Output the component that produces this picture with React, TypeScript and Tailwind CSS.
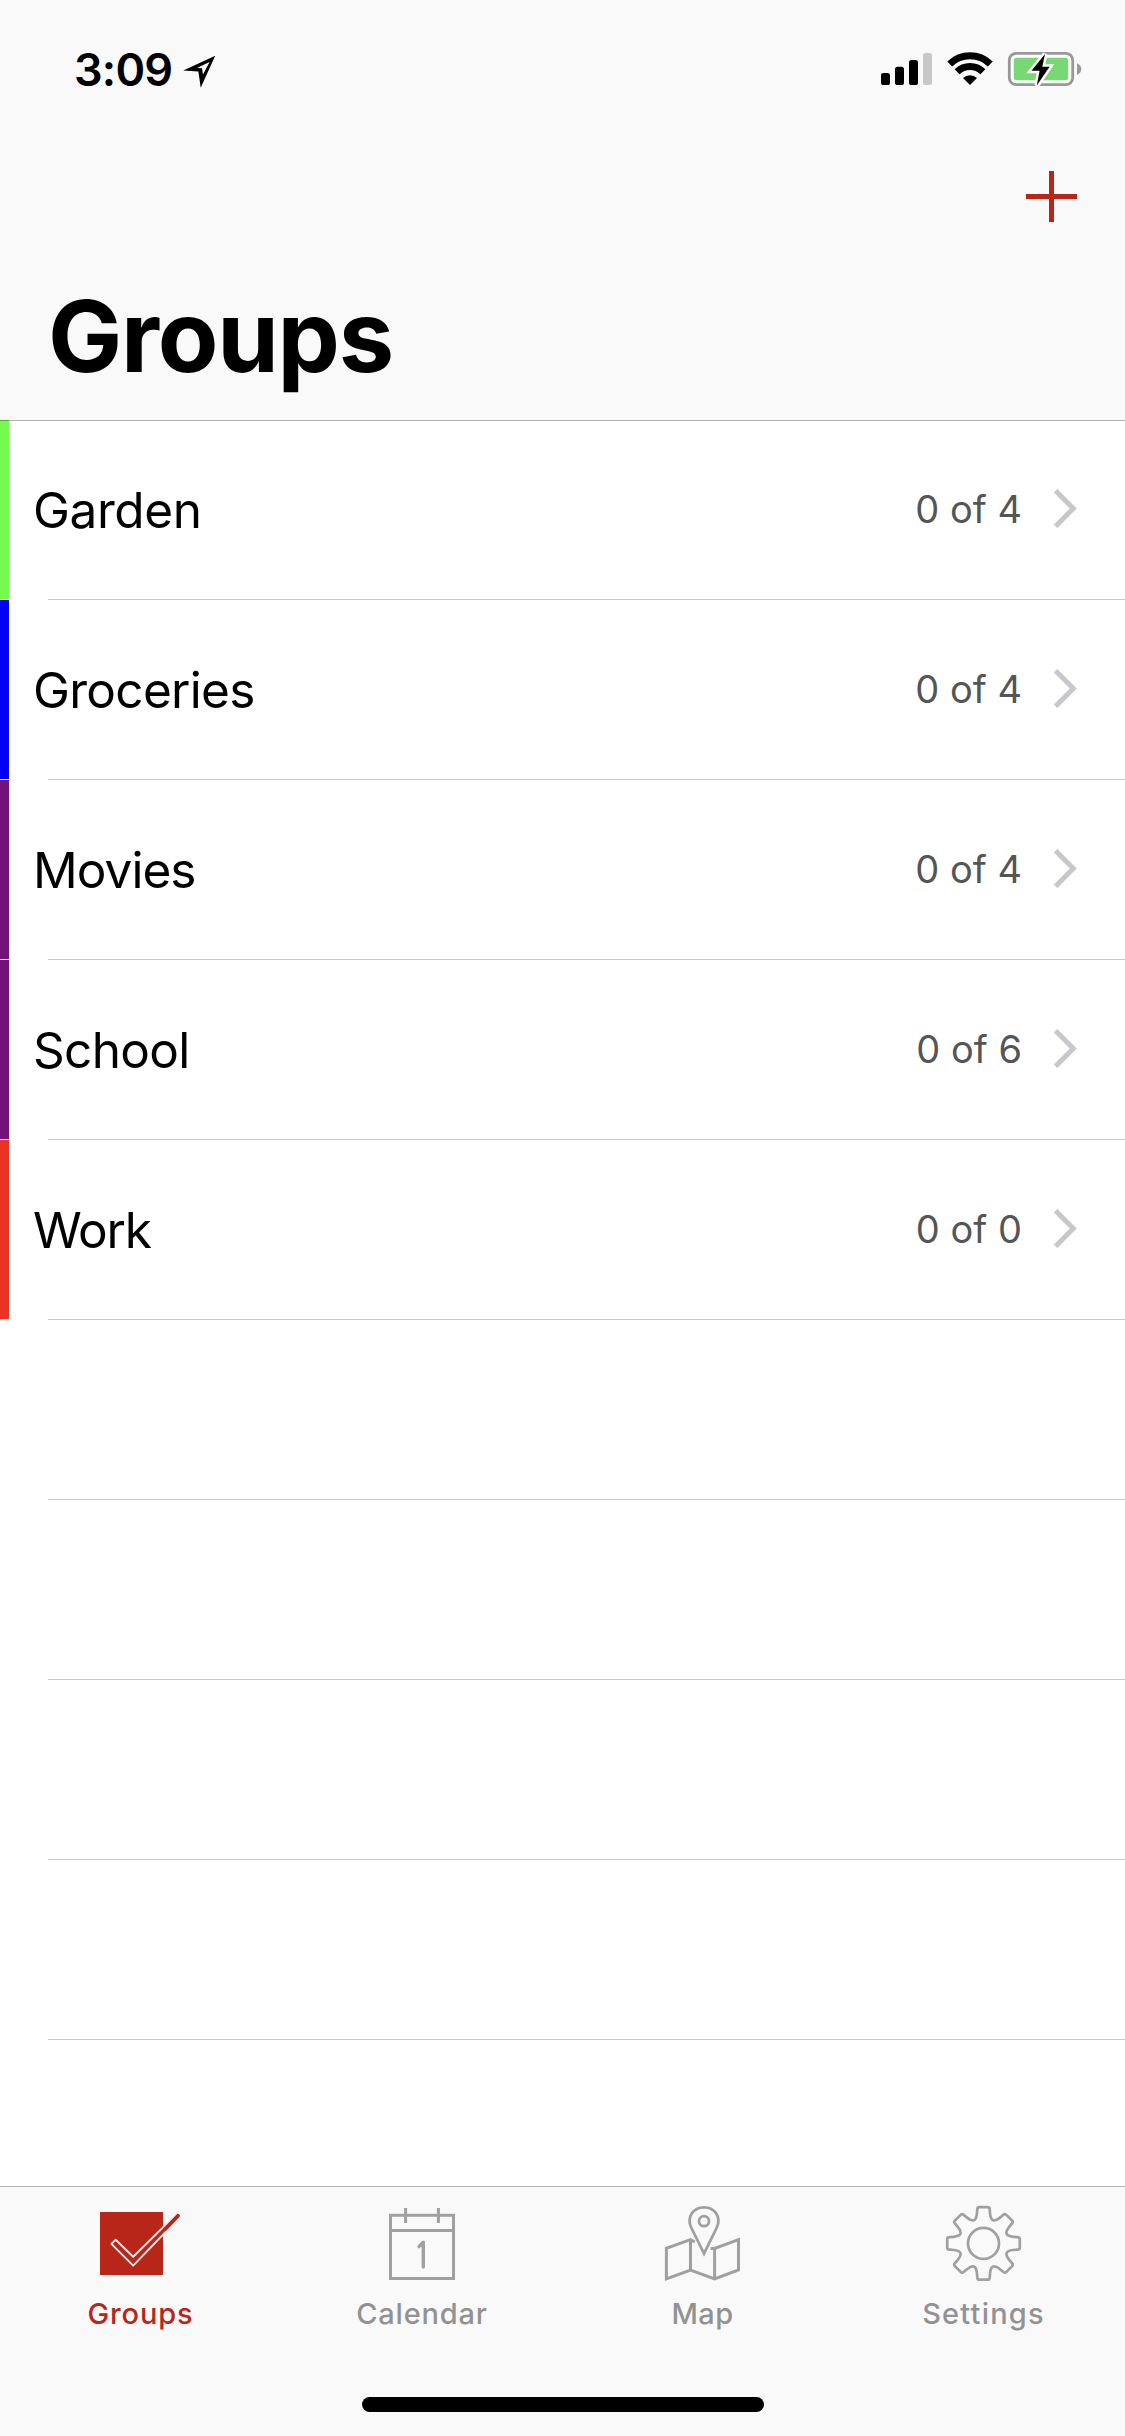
import type { ReactNode } from 'react';

type Group = { name: string; tracking: string; count: string; color: string };

const groups: Group[] = [
  { name: 'Garden', tracking: 'tracking-[-0.4px]', count: '0 of 4', color: 'bg-[#75fb4c]' },
  { name: 'Groceries', tracking: 'tracking-[-0.7px]', count: '0 of 4', color: 'bg-[#0000f5]' },
  { name: 'Movies', tracking: 'tracking-[-0.95px]', count: '0 of 4', color: 'bg-[#75127a]' },
  { name: 'School', tracking: 'tracking-[-0.7px]', count: '0 of 6', color: 'bg-[#75127a]' },
  { name: 'Work', tracking: 'tracking-[-1.2px]', count: '0 of 0', color: 'bg-[#eb3223]' },
];

const emptyRows = [0, 1, 2, 3];

function LocationArrow() {
  return (
    <svg className="h-[138px] w-9" viewBox="182 0 36 138">
      <path d="M215.2 55.8 L183.3 70.6 L198.4 71.4 L200.7 87.8 Z" fill="#000" />
      <path d="M209.6 61.9 L197 68 L202 68.2 L203 74.6 Z" fill="#f9f9f9" />
    </svg>
  );
}

function StatusIcons() {
  return (
    <svg className="h-[138px] w-[210px]" viewBox="880 0 210 138">
      <rect x="881" y="73" width="9" height="12" rx="2.6" />
      <rect x="895" y="66.7" width="9" height="18.3" rx="2.6" />
      <rect x="909" y="60" width="9" height="25" rx="2.6" />
      <rect x="923" y="53" width="9" height="32" rx="2.6" fill="#c8c8c8" />
      <g fill="none" stroke="#000" strokeWidth="7">
        <path d="M949.7 64 A29.2 29.2 0 0 1 990.3 64" />
        <path d="M957.1 71.7 A18.5 18.5 0 0 1 982.9 71.7" />
      </g>
      <path d="M970 85 L963 78 A10.2 10.2 0 0 1 977 78 Z" />
      <rect x="1009.3" y="53.3" width="63.4" height="31.4" rx="7" fill="#fcfcfc" stroke="#989898" strokeWidth="2.8" />
      <rect x="1013.8" y="57.8" width="54.4" height="22.4" rx="3" fill="#78d873" />
      <path d="M1077 63.2 Q1081.3 65.3 1081.3 69 Q1081.3 72.9 1077 75 Z" fill="#989898" />
      <path
        d="M1045 54 L1031.5 70.7 L1039.6 70.7 L1036.8 85.5 L1049.6 66.8 L1042.3 66.8 Z"
        fill="none"
        stroke="#fcfcfc"
        strokeWidth="5"
        strokeMiterlimit="3"
      />
      <path d="M1045 54 L1031.5 70.7 L1039.6 70.7 L1036.8 85.5 L1049.6 66.8 L1042.3 66.8 Z" />
    </svg>
  );
}

function PlusIcon() {
  return (
    <svg className="size-[51px]" viewBox="0 0 51 51" fill="#b82619">
      <path d="M23 0h5v23h23v5H28v23h-5V28H0v-5h23z" />
    </svg>
  );
}

function Chevron() {
  return (
    <svg className="mb-[3px] ml-[31px] h-[39px] w-[26px] shrink-0" viewBox="0 0 26 39" fill="none">
      <path d="M2.6 1.8 L20.3 19.5 L2.6 37.2" stroke="#c7c7cc" strokeWidth="5" />
    </svg>
  );
}

function GroupsIcon() {
  return (
    <svg className="h-[108px] w-full" viewBox="0 2187 281 108">
      <rect x="100" y="2212" width="63" height="63" fill="#b82619" />
      <path
        d="M115.7 2239.8 L111.4 2243.9 L133.2 2265.6 L180 2217 L177 2213.6 L133.2 2256.8 Z"
        fill="#b82619"
        stroke="#f9e9e8"
        strokeWidth="1.9"
        strokeLinejoin="round"
      />
      <path d="M165 2229.2 L178 2215.8" stroke="#b82619" strokeWidth="3.8" strokeLinecap="round" />
    </svg>
  );
}

function CalendarIcon() {
  return (
    <svg className="h-[108px] w-full" viewBox="281 2187 282 108" fill="none" stroke="#a0a0a0" strokeWidth="3">
      <rect x="390.5" y="2215.3" width="63" height="63.2" />
      <path d="M390 2230.5h64M405.6 2208v15M438.4 2208v15" />
      <path d="M419 2246.6l4.3-4.3V2267" strokeWidth="3.4" strokeLinecap="round" strokeLinejoin="round" />
    </svg>
  );
}

function MapIcon() {
  return (
    <svg className="h-[108px] w-full" viewBox="563 2187 281 108" fill="none" stroke="#a0a0a0" strokeWidth="3">
      <path d="M694.8 2242 L690.5 2239.7 L666.4 2248.4 V2278.8 L690.5 2270 L714.6 2278.8 L738.5 2270 V2239.7 L714.6 2248.4 H710.6" />
      <path d="M690.5 2239.7V2270M714.6 2248.4V2278.8" />
      <path d="M704 2253.5 L691.4 2228 C686 2217 693.5 2207.4 704 2207.4 S722 2217 716.6 2228 Z" strokeWidth="2.8" />
      <circle cx="704" cy="2221.2" r="5" strokeWidth="2.8" />
    </svg>
  );
}

const toothAngles = [0, 45, 90, 135, 180, 225, 270, 315];

function rotated(x: number, y: number, degrees: number) {
  const a = (degrees * Math.PI) / 180;
  const px = 983.5 + x * Math.cos(a) - y * Math.sin(a);
  const py = 2243.4 + x * Math.sin(a) + y * Math.cos(a);
  return `${px.toFixed(2)} ${py.toFixed(2)}`;
}

const gearOutline =
  toothAngles
    .map(
      (a, i) =>
        `${i === 0 ? 'M' : 'L'}${rotated(-6.2, -34, a)} Q${rotated(-6.2, -36.3, a)} ${rotated(-4, -36.3, a)} ` +
        `L${rotated(4, -36.3, a)} Q${rotated(6.2, -36.3, a)} ${rotated(6.2, -34, a)} L${rotated(6.6, -29.5, a)} ` +
        `C${rotated(7.4, -22.3, a)} ${rotated(-7.4, -22.3, a + 45)} ${rotated(-6.6, -29.5, a + 45)}`,
    )
    .join(' ') + ' Z';

function SettingsIcon() {
  return (
    <svg className="h-[108px] w-full" viewBox="844 2187 281 108" fill="none" stroke="#a0a0a0" strokeWidth="2.7">
      <path d={gearOutline} strokeLinejoin="round" />
      <circle cx="983.5" cy="2243.4" r="15.5" />
    </svg>
  );
}

function Tab({ icon, label, className }: { icon: ReactNode; label: string; className: string }) {
  return (
    <div className="flex flex-col items-center">
      {icon}
      <span className={`text-[29px] leading-[37px] font-medium ${className}`}>{label}</span>
    </div>
  );
}

export default function App() {
  return (
    <div className="flex h-[2436px] w-[1125px] flex-col overflow-hidden bg-white font-['Inter',sans-serif] text-black">
      <header className="relative z-10 -mb-px h-[421px] shrink-0 border-b border-black/30 bg-[#f9f9f9] bg-clip-padding">
        <div className="flex h-[138px] items-center justify-between pr-[35px] pl-[74px]">
          <div className="flex items-center">
            <span className="w-[108px] text-[45px] leading-none font-semibold tracking-[-0.8px]">3:09</span>
            <LocationArrow />
          </div>
          <StatusIcons />
        </div>
        <div className="flex h-[117px] items-center justify-end pr-12">
          <PlusIcon />
        </div>
        <h1 className="pl-12 text-[99px] leading-[162px] font-bold tracking-[-1.25px]">Groups</h1>
      </header>

      <main className="min-h-0 flex-1 overflow-hidden">
        {groups.map((g) => (
          <div key={g.name} className="flex h-[180px]">
            <div className={`h-[179px] w-[9px] shrink-0 ${g.color}`} />
            <div className="flex min-w-0 flex-1 flex-col">
              <div className="flex h-[179px] items-center pr-[46px] pl-6">
                <span className={`flex-1 text-[49.5px] leading-[60px] ${g.tracking}`}>{g.name}</span>
                <span className="pb-0.5 text-[38px] leading-[46px] text-[#555555]">{g.count}</span>
                <Chevron />
              </div>
              <div className="ml-[39px] h-px bg-[#c8c7cc]" />
            </div>
          </div>
        ))}
        {emptyRows.map((row) => (
          <div key={row} className="ml-12 h-[180px] border-b border-[#c8c7cc]" />
        ))}
      </main>

      <footer className="flex h-[250px] shrink-0 flex-col border-t border-[#b2b2b2] bg-[#f9f9f9]">
        <nav className="grid grid-cols-[281px_282px_281px_281px]">
          <Tab icon={<GroupsIcon />} label="Groups" className="tracking-[0.9px] text-[#b82619]" />
          <Tab icon={<CalendarIcon />} label="Calendar" className="tracking-[0.8px] text-[#929292]" />
          <Tab icon={<MapIcon />} label="Map" className="mr-0.5 tracking-[0.4px] text-[#929292]" />
          <Tab icon={<SettingsIcon />} label="Settings" className="mr-0.5 tracking-[1.2px] text-[#929292]" />
        </nav>
        <div className="mt-auto mb-6 ml-[362px] h-[15px] w-[402px] rounded-full bg-black" />
      </footer>
    </div>
  );
}
